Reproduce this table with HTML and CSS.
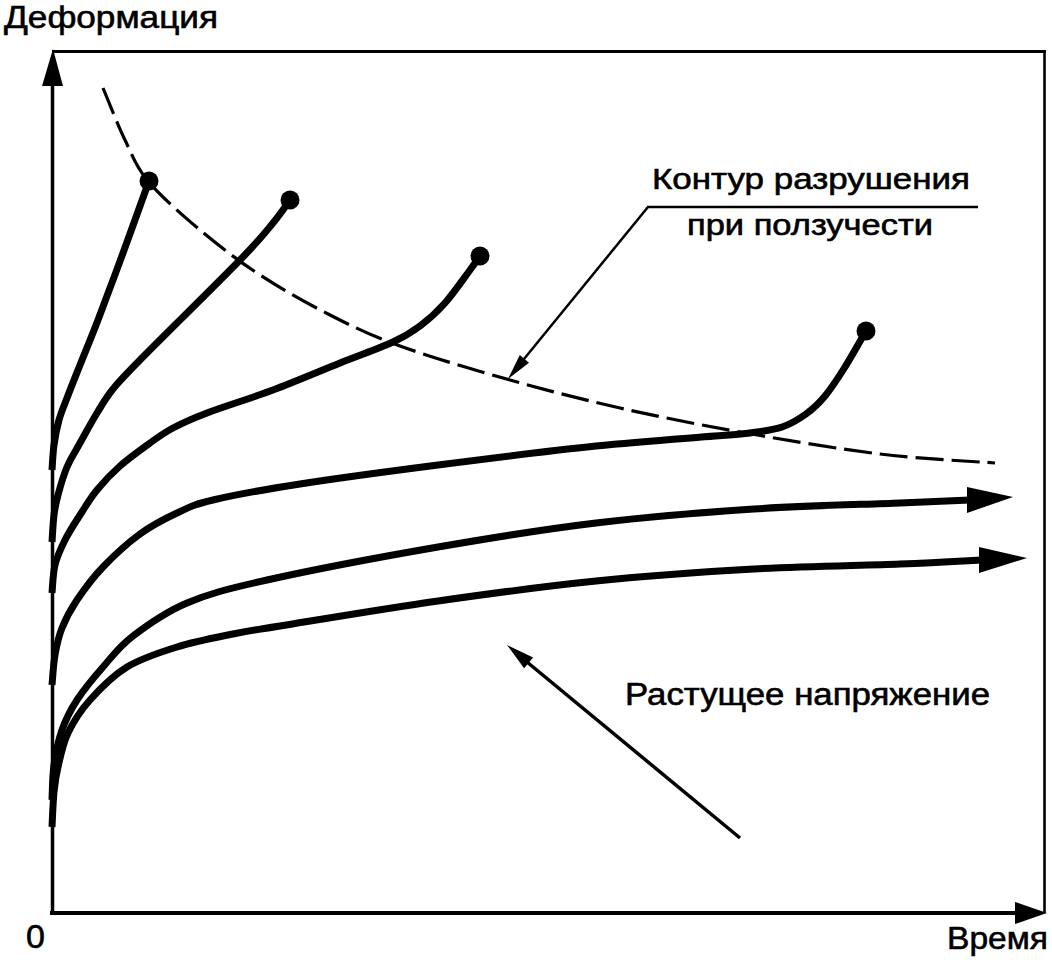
FILE: index.html
```html
<!DOCTYPE html>
<html lang="ru">
<head>
<meta charset="utf-8">
<title>Ползучесть</title>
<link rel="stylesheet" href="styles.css">
</head>
<body>
<svg class="chart" width="1052" height="960" viewBox="0 0 1052 960" xmlns="http://www.w3.org/2000/svg">
  <!-- frame -->
  <line class="frame" x1="52" y1="51.5" x2="1046" y2="51.5"/>
  <line class="frame-right" x1="1044.5" y1="50" x2="1044.5" y2="913"/>
  <line class="axis-y" x1="52.5" y1="914" x2="52.5" y2="84"/>
  <polygon class="head" points="42,86 63,86 53,49"/>
  <line class="axis-x" x1="50" y1="913" x2="1017" y2="913"/>
  <polygon class="head" points="1015,902 1015,924 1047,913"/>

  <!-- rupture contour -->
  <path class="contour" data-points="103,88 125,140 148,181 200,230 260,275 330,315 400,346 510,380 620,408 740,432 880,454 995,463"/>

  <!-- creep curves -->
  <path class="curve" data-points="52,470 54,445 59,420 67,398 80,365 98,320 123,253 149,181"/>
  <path class="curve" data-points="52,542 54,515 58,495 67,467 80,443 97,413 113,389 140,360 240,260 273,223 290,200"/>
  <path class="curve" data-points="52,593 55,565 65,540 80,515 97,490 120,466 150,443 173,428 207,413 273,390 340,363 393,342 420,326 445,303 470,270 480,256"/>
  <path class="curve" data-points="52,685 55,655 62,628 77,600 103,567 140,534 177,513 213,500 300,484 438,465 596,446 715,436 750,433 782,427 806,414 825,396 845,367 866,331"/>
  <path class="curve" data-points="52,800 54,765 62,730 77,700 103,667 133,636 187,603 267,580 438,547 596,523 754,509 900,503 970,500"/>
  <path class="curve" data-points="52,827 54,792 58,767 68,733 90,700 127,667 177,647 233,634 280,626 438,601 596,581 754,569 900,564 982,560"/>

  <polygon class="head" points="967,487 967,513 1013,497"/>
  <polygon class="head" points="979,547 979,573 1027,558"/>

  <circle class="dot" cx="149" cy="181" r="9.5"/>
  <circle class="dot" cx="290" cy="200" r="9.5"/>
  <circle class="dot" cx="480" cy="256" r="9.5"/>
  <circle class="dot" cx="866" cy="331" r="9.5"/>

  <!-- leader to contour -->
  <polyline class="leader" points="978,207 648,207 524,359"/>
  <polygon class="head" points="508,379 529,362.7 519.8,355.1"/>

  <!-- increasing stress arrow -->
  <line class="stress" x1="740" y1="838" x2="527" y2="662"/>
  <polygon class="head" points="507,645 533.1,657.5 524.1,668.3"/>

  <!-- labels -->
  <text class="label label-y" x="4" y="28" textLength="214" lengthAdjust="spacingAndGlyphs">Деформация</text>
  <text class="label label-c" x="652" y="189" textLength="318" lengthAdjust="spacingAndGlyphs">Контур разрушения</text>
  <text class="label label-c" x="687" y="235" textLength="246" lengthAdjust="spacingAndGlyphs">при ползучести</text>
  <text class="label label-s" x="625" y="705" textLength="365" lengthAdjust="spacingAndGlyphs">Растущее напряжение</text>
  <text class="label label-0" x="26" y="948">0</text>
  <text class="label label-t" x="947" y="949" textLength="101" lengthAdjust="spacingAndGlyphs">Время</text>
</svg>
<script src="script.js"></script>
</body>
</html>
```

FILE: styles.css
```css
html, body {
  margin: 0;
  padding: 0;
  background: #ffffff;
}

.chart {
  display: block;
}

.frame {
  stroke: #000;
  stroke-width: 3;
}

.frame-right {
  stroke: #000;
  stroke-width: 2.6;
}

.axis-y {
  stroke: #000;
  stroke-width: 3.5;
}

.axis-x {
  stroke: #000;
  stroke-width: 4;
}

.head,
.dot {
  fill: #000;
  stroke: none;
}

.curve {
  fill: none;
  stroke: #000;
  stroke-width: 7;
  stroke-linecap: butt;
  stroke-linejoin: round;
}

.contour {
  fill: none;
  stroke: #000;
  stroke-width: 3.2;
  stroke-dasharray: 28 8;
}

.leader {
  fill: none;
  stroke: #000;
  stroke-width: 2.5;
}

.stress {
  stroke: #000;
  stroke-width: 3.5;
}

.label {
  font-family: "Liberation Sans", Arial, sans-serif;
  fill: #000;
  stroke: #000;
  stroke-width: 0.6px;
}

.label-y {
  font-size: 31px;
}

.label-c {
  font-size: 29.5px;
}

.label-s {
  font-size: 31px;
}

.label-0 {
  font-size: 34px;
}

.label-t {
  font-size: 32px;
}
```

FILE: script.js
```js
(function () {
  function parse(str) {
    return str.trim().split(/\s+/).map(function (p) {
      var xy = p.split(',');
      return [parseFloat(xy[0]), parseFloat(xy[1])];
    });
  }
  function smooth(pts) {
    var d = 'M' + pts[0][0] + ',' + pts[0][1];
    for (var i = 0; i < pts.length - 1; i++) {
      var p0 = pts[i - 1] || pts[i];
      var p1 = pts[i];
      var p2 = pts[i + 1];
      var p3 = pts[i + 2] || p2;
      var c1x = p1[0] + (p2[0] - p0[0]) / 6;
      var c1y = p1[1] + (p2[1] - p0[1]) / 6;
      var c2x = p2[0] - (p3[0] - p1[0]) / 6;
      var c2y = p2[1] - (p3[1] - p1[1]) / 6;
      d += ' C' + c1x.toFixed(2) + ',' + c1y.toFixed(2) + ' ' +
        c2x.toFixed(2) + ',' + c2y.toFixed(2) + ' ' + p2[0] + ',' + p2[1];
    }
    return d;
  }
  var paths = document.querySelectorAll('path[data-points]');
  for (var i = 0; i < paths.length; i++) {
    paths[i].setAttribute('d', smooth(parse(paths[i].getAttribute('data-points'))));
  }
})();
```
